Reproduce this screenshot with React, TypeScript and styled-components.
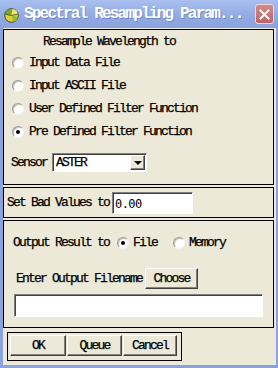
import React from "react";
import styled, { createGlobalStyle } from "styled-components";

const MONO = `"Liberation Mono", "Courier New", "Cousine", monospace`;

const GlobalStyle = createGlobalStyle`
  html, body { margin: 0; padding: 0; }
  body {
    font-family: ${MONO};
    background: #ece9d8;
  }
  * { box-sizing: border-box; }
`;

const Window = styled.div`
  width: 278px;
  height: 368px;
  display: flex;
  flex-direction: column;
  background: #8aa3de;
`;

const TitleBar = styled.div`
  height: 28px;
  flex: none;
  display: flex;
  align-items: center;
  padding: 0 4px 0 4px;
  background: linear-gradient(#a9bff0, #93abe4 55%, #8aa3de);
`;

const IconWrap = styled.div`
  width: 15px;
  height: 15px;
  margin-top: 2px;
  flex: none;
  display: flex;
`;

const Title = styled.div`
  margin-left: 5px;
  flex: 1;
  color: #ffffff;
  font-family: ${MONO};
  font-weight: bold;
  font-size: 16px;
  letter-spacing: -1.8px;
  white-space: nowrap;
  overflow: hidden;
  text-shadow: 1px 1px 0 rgba(70, 90, 150, 0.45);
`;

const CloseButton = styled.div`
  width: 19px;
  height: 20px;
  flex: none;
  border-radius: 3px;
  border: 1px solid #f3d6d6;
  background: linear-gradient(#d58a8a, #c06262);
  display: flex;
  align-items: center;
  justify-content: center;
`;

const Frame = styled.div`
  flex: 1;
  display: flex;
  padding: 0 2px 3px 3px;
`;

const Client = styled.div`
  flex: 1;
  background: #ece9d8;
  display: flex;
  flex-direction: column;
  padding-top: 1px;
`;

const Section = styled.div<{ $h: number; $mt?: number }>`
  height: ${(p) => p.$h}px;
  margin: ${(p) => p.$mt ?? 0}px 2px 0 0;
  border: 1px solid #000;
  flex: none;
`;

const TargetSection = styled(Section)`
  padding: 3px 0 0 8px;
  display: flex;
  flex-direction: column;
`;

const BadSection = styled(Section)`
  display: flex;
  align-items: center;
  padding-left: 3px;
`;

const OutputSection = styled(Section)`
  padding: 11px 0 0 9px;
  display: flex;
  flex-direction: column;
`;

const Text = styled.span`
  font-family: ${MONO};
  font-size: 13px;
  letter-spacing: -1.8px;
  color: #000;
  -webkit-text-stroke: 0.25px #000;
  white-space: nowrap;
  line-height: 14px;
`;

const Heading = styled.div`
  height: 18px;
  display: flex;
  align-items: center;
  padding-left: 31px;
`;

const RadioRow = styled.label`
  height: 23px;
  display: flex;
  align-items: center;
  gap: 5px;
`;

const RadioDot = styled.span<{ $on?: boolean }>`
  width: 12px;
  height: 12px;
  flex: none;
  border-radius: 50%;
  border: 1px solid;
  border-color: #9a9a9a #f4f4f4 #f4f4f4 #9a9a9a;
  background: radial-gradient(circle at 60% 60%, #ffffff 55%, #e6e3d6 100%);
  box-shadow: inset 1px 1px 0 #c4c2b8;
  display: flex;
  align-items: center;
  justify-content: center;
  &::after {
    content: "";
    width: 4px;
    height: 4px;
    border-radius: 50%;
    background: ${(p) => (p.$on ? "#000" : "transparent")};
  }
`;

const SensorRow = styled.div`
  margin: 10px 0 0 -1px;
  display: flex;
  align-items: center;
  gap: 5px;
`;

const Dropdown = styled.div`
  width: 95px;
  height: 19px;
  background: #fff;
  border: 1px solid;
  border-color: #808080 #fff #fff #808080;
  box-shadow: inset 1px 1px 0 #404040;
  display: flex;
  align-items: center;
  justify-content: space-between;
  padding: 1px 1px 1px 3px;
`;

const DropArrow = styled.div`
  width: 15px;
  height: 15px;
  background: #ece9d8;
  border: 1px solid;
  border-color: #fff #404040 #404040 #fff;
  box-shadow: inset -1px -1px 0 #808080;
  display: flex;
  align-items: center;
  justify-content: center;
  &::after {
    content: "";
    border-left: 4px solid transparent;
    border-right: 4px solid transparent;
    border-top: 4px solid #000;
  }
`;

const Field = styled.div<{ $w: number; $h: number }>`
  width: ${(p) => p.$w}px;
  height: ${(p) => p.$h}px;
  flex: none;
  background: #fff;
  border: 1px solid;
  border-color: #808080 #fff #fff #808080;
  box-shadow: inset 1px 1px 0 #404040;
  padding: 2px 0 0 2px;
`;

const ValueText = styled.span`
  font-family: "DejaVu Sans Mono", monospace;
  font-size: 12px;
  letter-spacing: -0.6px;
  color: #000;
`;

const BadField = styled(Field)`
  margin-left: 3px;
`;

const OutputRow = styled.div`
  height: 22px;
  display: flex;
  align-items: center;
`;

const InlineRadio = styled.label<{ $ml: number }>`
  display: flex;
  align-items: center;
  gap: 4px;
  margin-left: ${(p) => p.$ml}px;
`;

const ChooseRow = styled.div`
  margin: 14px 0 0 3px;
  display: flex;
  align-items: center;
  gap: 3px;
`;

const PushButton = styled.button<{ $w: number }>`
  width: ${(p) => p.$w}px;
  height: 21px;
  flex: none;
  padding: 0;
  background: #ece9d8;
  border: 1px solid;
  border-color: #fff #404040 #404040 #fff;
  box-shadow: inset -1px -1px 0 #808080;
  font-family: ${MONO};
  font-size: 13px;
  letter-spacing: -1.8px;
  -webkit-text-stroke: 0.25px #000;
  color: #000;
  display: flex;
  align-items: center;
  justify-content: center;
`;

const FileField = styled(Field)`
  margin: 5px 0 0 1px;
`;

const ButtonBox = styled.div`
  margin: 4px 0 0 4px;
  width: 175px;
  height: 29px;
  flex: none;
  border: 1px solid #000;
  padding: 2px 0 0 2px;
  display: flex;
  gap: 1px;
`;

const AppIcon = () => (
  <svg width="15" height="15" viewBox="0 0 15 15">
    <circle cx="7.5" cy="7.5" r="6.8" fill="#e2cf3c" stroke="#3e4a1e" strokeWidth="1" />
    <path d="M1.2 6.2 A6.5 6.5 0 0 1 8.5 1 L7.5 7.5 Z" fill="#7aa62c" />
    <path d="M8.5 1 A6.5 6.5 0 0 1 13.9 6 L7.5 7.5 Z" fill="#f2e46a" />
    <path d="M7.5 7.5 L13.8 9 A6.5 6.5 0 0 1 9 13.8 Z" fill="#9bbd34" />
    <path d="M1.2 6.2 L7.5 7.5 L13.9 6" fill="none" stroke="#3e4a1e" strokeWidth="0.8" />
  </svg>
);

const CloseIcon = () => (
  <svg width="11" height="11" viewBox="0 0 11 11">
    <path d="M1.5 1.5 L9.5 9.5 M9.5 1.5 L1.5 9.5" stroke="#fff" strokeWidth="2" strokeLinecap="square" />
  </svg>
);

const targets = [
  "Input Data File",
  "Input ASCII File",
  "User Defined Filter Function",
  "Pre Defined Filter Function",
];

export default function App() {
  return (
    <>
      <GlobalStyle />
      <Window>
        <TitleBar>
          <IconWrap>
            <AppIcon />
          </IconWrap>
          <Title>Spectral Resampling Param...</Title>
          <CloseButton>
            <CloseIcon />
          </CloseButton>
        </TitleBar>
        <Frame>
          <Client>
            <TargetSection $h={156}>
              <Heading>
                <Text>Resample Wavelength to</Text>
              </Heading>
              {targets.map((t, i) => (
                <RadioRow key={t}>
                  <RadioDot $on={i === 3} />
                  <Text>{t}</Text>
                </RadioRow>
              ))}
              <SensorRow>
                <Text>Sensor</Text>
                <Dropdown>
                  <Text>ASTER</Text>
                  <DropArrow />
                </Dropdown>
              </SensorRow>
            </TargetSection>
            <BadSection $h={31} $mt={2}>
              <Text>Set Bad Values to</Text>
              <BadField $w={81} $h={22}>
                <ValueText>0.00</ValueText>
              </BadField>
            </BadSection>
            <OutputSection $h={108} $mt={2}>
              <OutputRow>
                <Text>Output Result to</Text>
                <InlineRadio $ml={8}>
                  <RadioDot $on />
                  <Text>File</Text>
                </InlineRadio>
                <InlineRadio $ml={16}>
                  <RadioDot />
                  <Text>Memory</Text>
                </InlineRadio>
              </OutputRow>
              <ChooseRow>
                <Text>Enter Output Filename</Text>
                <PushButton $w={53}>Choose</PushButton>
              </ChooseRow>
              <FileField $w={249} $h={23} />
            </OutputSection>
            <ButtonBox>
              <PushButton $w={56}>OK</PushButton>
              <PushButton $w={55}>Queue</PushButton>
              <PushButton $w={54}>Cancel</PushButton>
            </ButtonBox>
          </Client>
        </Frame>
      </Window>
    </>
  );
}
